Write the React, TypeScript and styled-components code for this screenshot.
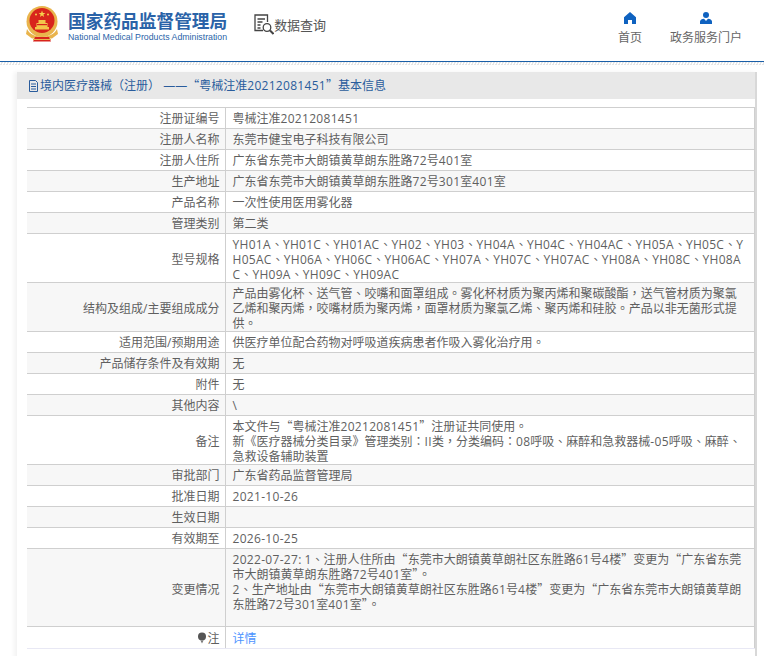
import React from "react";
import styled, { createGlobalStyle } from "styled-components";

const FONT = `"Open Sans", "Noto Sans CJK SC", sans-serif`;

const Global = createGlobalStyle`
  html, body { margin: 0; padding: 0; background: #fff; }
  body { font-family: ${FONT}; font-size: 12px; color: #595959; overflow: hidden; height: 656px; }
`;

const Page = styled.div`
  width: 764px;
  height: 656px;
  overflow: hidden;
  background: #fff;
`;
const Header = styled.header`
  height: 61px;
  background: #fff;
  border-bottom: 1px solid #1a5fa8;
  display: flex;
  align-items: flex-start;
`;
const DotStrip = styled.div`
  height: 3px;
  background-image: repeating-conic-gradient(#e6e6e6 0 25%, #fff 0 50%);
  background-size: 3px 3px;
`;
const Brand = styled.div`
  display: flex;
  margin: 6px 0 0 25px;
  gap: 9px;
`;
const BrandText = styled.div`
  display: flex;
  flex-direction: column;
  padding-top: 2px;
`;
const BrandCn = styled.div`
  font: bold 17.7px/24px "Noto Sans CJK SC", sans-serif;
  color: #2a63a8;
  white-space: nowrap;
`;
const BrandEn = styled.div`
  font: 8.750px/11px "Liberation Sans", sans-serif;
  color: #2a63a8;
  white-space: nowrap;
`;
const Query = styled.div`
  display: flex;
  align-items: center;
  margin: 14px 0 0 27px;
  font: 13px/20px "Noto Sans CJK SC", sans-serif;
  color: #555;
  letter-spacing: -0.1px;
`;
const Nav = styled.nav`
  margin-left: auto;
  display: flex;
  gap: 28px;
  margin-right: 22px;
  padding-top: 12px;
`;
const NavItem = styled.div`
  display: flex;
  flex-direction: column;
  align-items: center;
  gap: 5px;
  font: 12px/16px "Noto Sans CJK SC", sans-serif;
  color: #666;
`;
const Card = styled.main`
  margin: 7px 7px 0 17px;
  height: 600px;
  background: #fff;
  border-right: 2px solid #d8d8d8;
  box-shadow: -3px 0 4px rgba(0,0,0,.05);
`;
const TitleBar = styled.div`
  height: 27px;
  background: #e8e8e8;
  display: flex;
  align-items: center;
  padding-left: 11px;
  font: 12px/16px ${FONT};
  color: #2a5c9c;
  gap: 1px;
  white-space: pre;
`;
const Table = styled.table`
  border-collapse: collapse;
  table-layout: fixed;
  margin: 8px 0 0 10px;
  width: 728px;
`;
const Row = styled.tr<{ $alt: boolean; $multi?: boolean }>`
  height: 21px;
  background: ${p => (p.$alt ? "#f7f7f7" : "#fff")};
  td {
    padding-top: ${p => (p.$multi ? 3 : 1)}px;
  }
`;
const LastRow = styled(Row)`
  height: 22px;
`;
const Label = styled.td`
  width: 198px;
  box-sizing: border-box;
  border: 1px solid #cfcfcf;
  border-left: none;
  padding: 1px 5px 0 0;
  text-align: right;
  vertical-align: middle;
  font: 12px/15px ${FONT};
  color: #5f5f5f;
`;
const Value = styled.td`
  border: 1px solid #cfcfcf;
  padding: 1px 7px 0;
  font: 12px/15px ${FONT};
  color: #5f5f5f;
  word-break: break-all;
  vertical-align: middle;
`;
const LastLabel = styled(Label)`
  border-bottom-color: #e8e8f4;
`;
const LastValue = styled(Value)`
  border-bottom-color: #e8e8f4;
`;
const Spacer = styled.div<{ $h: number }>`
  height: ${p => p.$h}px;
`;
const Detail = styled.span`
  color: #4d94ff;
`;
const Punct = styled.span`
  font-family: "Noto Sans CJK TC", sans-serif;
  line-height: 0;
`;
const Latin = styled.span`
  letter-spacing: 0.3px;
`;
const Line = styled.div``;
const BulbSvg = styled.svg`
  vertical-align: -1px;
`;

const P = ({ t }: { t: string }) => (
  <>
    {t.split(/([“”、，。：（）《》]|[A-Za-z0-9-]+)/).map((s, i) =>
      i % 2 === 0 ? (
        <React.Fragment key={i}>{s}</React.Fragment>
      ) : /^[A-Za-z0-9-]/.test(s) ? (
        <Latin key={i}>{s}</Latin>
      ) : (
        <Punct key={i}>{s}</Punct>
      )
    )}
  </>
);

const Emblem = () => (
  <svg width="34" height="36" viewBox="0 0 34 36">
    <circle cx="17" cy="15.500" r="15.500" fill="#e9b44c" />
    <circle cx="17" cy="14.500" r="12.500" fill="#d8241c" />
    <path d="M17 4.500l.9 2.400h2.500l-2 1.500.7 2.500-2.100-1.500-2.100 1.500.7-2.500-2-1.500h2.500z" fill="#f6d04d" />
    <circle cx="11" cy="8.500" r="1" fill="#f6d04d" />
    <circle cx="23" cy="8.500" r="1" fill="#f6d04d" />
    <path d="M10 21h14v2.500H10zM11.500 17h11v4h-11zM13.500 14h7v3h-7z" fill="#f3c64a" />
    <path d="M12 18h10v1.200H12z" fill="#d8241c" />
    <path d="M2 23c3 6 9 7.500 15 7.500S29 29 32 23l1 5-6 4.500H7L1 28z" fill="#e9b44c" />
    <path d="M10 31h14l2 4.500H8z" fill="#d8241c" />
    <path d="M8 33h18v1H8z" fill="#e9b44c" />
  </svg>
);
const QueryIcon = () => (
  <svg width="20" height="21" viewBox="0 0 20 21" fill="none" stroke="#444" strokeWidth="1.3">
    <path d="M9 16.500H1V1h12.500v7" />
    <path d="M3.500 5h7.500M3.500 8h5M3.500 11h3M3.500 14h3" />
    <circle cx="13" cy="13.500" r="3.800" />
    <path d="M16 16.500l3.500 3.500" strokeWidth="2" />
  </svg>
);
const HomeIcon = () => (
  <svg width="12" height="12" viewBox="0 0 12 12" fill="#0f62c0">
    <path d="M6 0L0 5.200V12h4V8h4v4h4V5.200z" />
  </svg>
);
const UserIcon = () => (
  <svg width="12" height="12" viewBox="0 0 12 12" fill="#0f62c0">
    <circle cx="6" cy="3" r="3" />
    <path d="M0 12V9.500C0 8 2 7 4 6.800L6 9l2-2.200C10 7 12 8 12 9.500V12z" />
  </svg>
);
const DocIcon = () => (
  <svg width="11" height="12" viewBox="0 0 11 12" fill="none" stroke="#2a5c9c" strokeWidth="1">
    <path d="M1.500.500h6l2 2v9h-8zM3 4h5M3 6.500h5M3 9h5" />
  </svg>
);
const Bulb = () => (
  <BulbSvg width="10" height="12" viewBox="0 0 10 12">
    <circle cx="5" cy="4.500" r="4" fill="#555" />
    <path d="M3.500 8.500h3L5 11.500z" fill="#777" />
  </BulbSvg>
);

const MULTI = new Set([6, 7, 12, 17]);

const rows: [React.ReactNode, React.ReactNode][] = [
  ["注册证编号", <P t="粤械注准20212081451" />],
  ["注册人名称", "东莞市健宝电子科技有限公司"],
  ["注册人住所", <P t="广东省东莞市大朗镇黄草朗东胜路72号401室" />],
  ["生产地址", <P t="广东省东莞市大朗镇黄草朗东胜路72号301室401室" />],
  ["产品名称", "一次性使用医用雾化器"],
  ["管理类别", "第二类"],
  ["型号规格", <P t="YH01A、YH01C、YH01AC、YH02、YH03、YH04A、YH04C、YH04AC、YH05A、YH05C、YH05AC、YH06A、YH06C、YH06AC、YH07A、YH07C、YH07AC、YH08A、YH08C、YH08AC、YH09A、YH09C、YH09AC" />],
  ["结构及组成/主要组成成分", <P t="产品由雾化杯、送气管、咬嘴和面罩组成。雾化杯材质为聚丙烯和聚碳酸酯，送气管材质为聚氯乙烯和聚丙烯，咬嘴材质为聚丙烯，面罩材质为聚氯乙烯、聚丙烯和硅胶。产品以非无菌形式提供。" />],
  ["适用范围/预期用途", <P t="供医疗单位配合药物对呼吸道疾病患者作吸入雾化治疗用。" />],
  ["产品储存条件及有效期", "无"],
  ["附件", "无"],
  ["其他内容", "\\"],
  ["备注", <><Line><P t="本文件与“粤械注准20212081451”注册证共同使用。" /></Line><Line><P t="新《医疗器械分类目录》管理类别：II类，分类编码：08呼吸、麻醉和急救器械-05呼吸、麻醉、急救设备辅助装置" /></Line></>],
  ["审批部门", "广东省药品监督管理局"],
  ["批准日期", <P t="2021-10-26" />],
  ["生效日期", ""],
  ["有效期至", <P t="2026-10-25" />],
  ["变更情况", <><Line><P t="2022-07-27: 1、注册人住所由“东莞市大朗镇黄草朗社区东胜路61号4楼”变更为“广东省东莞市大朗镇黄草朗东胜路72号401室”。" /></Line><Line><P t="2、生产地址由“东莞市大朗镇黄草朗社区东胜路61号4楼”变更为“广东省东莞市大朗镇黄草朗东胜路72号301室401室”。" /></Line><Spacer $h={14} /></>],
];

export default function App() {
  return (
    <Page>
      <Global />
      <Header>
        <Brand>
          <Emblem />
          <BrandText>
            <BrandCn>国家药品监督管理局</BrandCn>
            <BrandEn>National Medical Products Administration</BrandEn>
          </BrandText>
        </Brand>
        <Query>
          <QueryIcon />
          数据查询
        </Query>
        <Nav>
          <NavItem><HomeIcon />首页</NavItem>
          <NavItem><UserIcon />政务服务门户</NavItem>
        </Nav>
      </Header>
      <DotStrip />
      <Card>
        <TitleBar>
          <DocIcon />
          <span><P t="境内医疗器械（注册） ——“粤械注准20212081451”基本信息" /></span>
        </TitleBar>
        <Table>
          <tbody>
            {rows.map((r, i) => (
              <Row key={i} $alt={i % 2 === 1} $multi={MULTI.has(i)}>
                <Label>{r[0]}</Label>
                <Value>{r[1]}</Value>
              </Row>
            ))}
            <LastRow $alt={false}>
              <LastLabel><Bulb />注</LastLabel>
              <LastValue><Detail>详情</Detail></LastValue>
            </LastRow>
          </tbody>
        </Table>
      </Card>
    </Page>
  );
}
